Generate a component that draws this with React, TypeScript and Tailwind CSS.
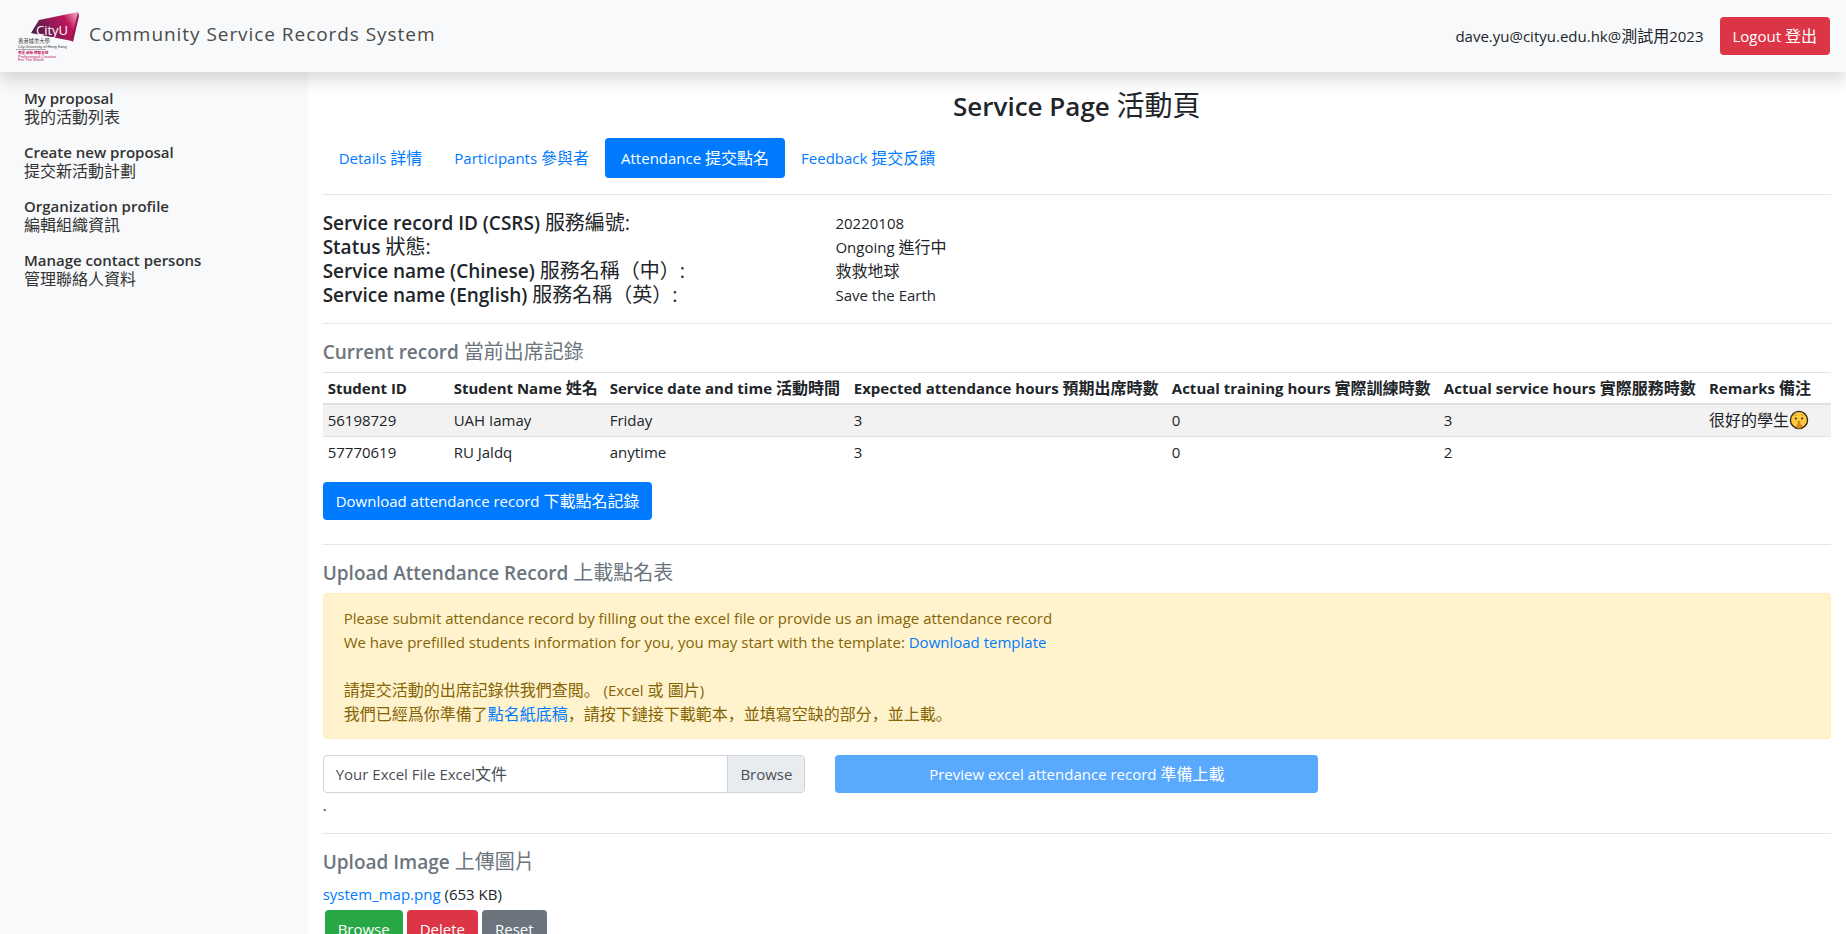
import type { ReactNode } from "react";

function Zh({ children }: { children: ReactNode }) {
  return (
    <span lang="zh-HK" className="text-[16px]">
      {children}
    </span>
  );
}

function CityULogo() {
  return (
    <svg width="64" height="52" viewBox="0 0 64 52" role="img" aria-label="CityU" className="shrink-0">
      <defs>
        <linearGradient id="gem" x1="0" y1="0.6" x2="1" y2="0.2">
          <stop offset="0" stopColor="#4a1d45" />
          <stop offset="0.4" stopColor="#8c1a55" />
          <stop offset="0.75" stopColor="#c0145c" />
          <stop offset="1" stopColor="#e79ab8" />
        </linearGradient>
      </defs>
      <path d="M15 23 23 10 62 2 57 30 56 31Z" fill="url(#gem)" />
      <path d="M62 2 63 6 57 32 55 30Z" fill="#a01252" />
      <text x="20" y="25" fontSize="13" fill="#ffffff" fontFamily="'Open Sans', sans-serif">CityU</text>
      <text x="2" y="33" fontSize="5.3" fill="#333333" fontFamily="'Noto Sans CJK TC', sans-serif">香港城市大學</text>
      <text x="2" y="38" fontSize="3.8" fill="#333333" fontFamily="'Liberation Sans', sans-serif">City University of Hong Kong</text>
      <path d="M0 39.5H30" stroke="#8c6a80" strokeWidth="0.6" />
      <text x="2" y="44" fontSize="3.6" fontWeight="700" fill="#c0145c" fontFamily="'Noto Sans CJK TC', sans-serif">專業 創新 胸懷全球</text>
      <text x="2" y="48" fontSize="4" fill="#c0145c" fontFamily="'Liberation Sans', sans-serif">Professional·Creative</text>
      <text x="2" y="51" fontSize="4" fill="#c0145c" fontFamily="'Liberation Sans', sans-serif">For The World</text>
    </svg>
  );
}

function ShushingFace() {
  return (
    <svg width="20" height="20" viewBox="0 0 20 20" role="img" aria-label="Shushing face" className="inline-block align-[-4px]">
      <circle cx="10" cy="10" r="8.6" fill="#ffc83d" stroke="#2b2410" strokeWidth="1.3" />
      <path d="M5 5.8q1.4-1.4 2.8-.8M12.2 5q1.4-.6 2.8.8" stroke="#c98a1c" strokeWidth="0.8" fill="none" />
      <circle cx="6.9" cy="8.6" r="1" fill="#2b2410" />
      <circle cx="13.1" cy="8.6" r="1" fill="#2b2410" />
      <path d="M9.2 11.4q.8-.8 1.6 0v3.2l1.8.4v2.9q-2.6.9-4.8.2v-2.8l1.4-.7Z" fill="#e08a1c" stroke="#a8640f" strokeWidth="0.5" />
    </svg>
  );
}

const menu = [
  ["My proposal", "我的活動列表"],
  ["Create new proposal", "提交新活動計劃"],
  ["Organization profile", "編輯組織資訊"],
  ["Manage contact persons", "管理聯絡人資料"],
];

const tabs = [
  ["Details", "詳情"],
  ["Participants", "參與者"],
  ["Attendance", "提交點名"],
  ["Feedback", "提交反饋"],
];

const info = [
  { en: "Service record ID (CSRS)", zh: "服務編號:", value: "20220108" },
  { en: "Status", zh: "狀態:", value: <>Ongoing <Zh>進行中</Zh></> },
  { en: "Service name (Chinese)", zh: "服務名稱（中）:", value: <Zh>救救地球</Zh> },
  { en: "Service name (English)", zh: "服務名稱（英）:", value: "Save the Earth" },
];

const columns = [
  { en: "Student ID", zh: "", width: "w-[126px]" },
  { en: "Student Name", zh: "姓名", width: "w-[156px]" },
  { en: "Service date and time", zh: "活動時間", width: "w-[244px]" },
  { en: "Expected attendance hours", zh: "預期出席時數", width: "w-[318px]" },
  { en: "Actual training hours", zh: "實際訓練時數", width: "w-[272px]" },
  { en: "Actual service hours", zh: "實際服務時數", width: "w-[265px]" },
  { en: "Remarks", zh: "備注", width: "w-[127px]" },
];

const rows = [
  ["56198729", "UAH Iamay", "Friday", "3", "0", "3", <><Zh>很好的學生</Zh><ShushingFace /></>],
  ["57770619", "RU Jaldq", "anytime", "3", "0", "2", ""],
];

function SectionHeading({ en, zh }: { en: string; zh: string }) {
  return (
    <h2 className="mb-2 text-[19px] leading-6 font-semibold text-[#6c757d]">
      {en} <span className="text-[20px] font-normal">{zh}</span>
    </h2>
  );
}

function Rule() {
  return <hr className="my-4 border-t border-[#e5e5e5]" />;
}

const button = "h-[38px] cursor-pointer rounded px-[13px] text-white whitespace-nowrap";

export default function App() {
  return (
    <div className="flex min-h-screen flex-col bg-white font-['Open_Sans','Noto_Sans_CJK_TC',sans-serif] text-[15px] leading-6 text-[#212529]">
      <header className="relative z-10 flex h-[72px] items-center justify-between bg-[#f8f9fb] px-4 shadow-[0_8px_16px_rgba(0,0,0,0.15)]">
        <a href="#home" className="flex items-center gap-[9px]">
          <CityULogo />
          <span className="pb-1 text-[19px] tracking-wider text-[#4a4a4a]">Community Service Records System</span>
        </a>
        <div className="flex items-center gap-4">
          <span>dave.yu@cityu.edu.hk@<Zh>測試用</Zh>2023</span>
          <button type="button" className={`${button} bg-[#dc3545]`}>Logout <Zh>登出</Zh></button>
        </div>
      </header>

      <div className="flex flex-1">
        <nav aria-label="Main menu" className="w-1/6 shrink-0 bg-[#f8f9fb] px-6 pt-[17px]">
          <ul className="flex flex-col gap-4">
            {menu.map(([en, zh]) => (
              <li key={en}>
                <a href="#menu" className="block leading-[19px] text-[#333333]">
                  <span className="block font-semibold">{en}</span>
                  <span lang="zh-HK" className="block text-[16px]">{zh}</span>
                </a>
              </li>
            ))}
          </ul>
        </nav>

        <main className="min-w-0 flex-1 px-[15px] pt-4 pb-8">
          <h1 className="mb-[15px] text-center text-[26px] leading-[34px] font-semibold">
            Service Page <span className="text-[28px] font-normal">活動頁</span>
          </h1>

          <nav aria-label="Service sections" className="flex">
            {tabs.map(([en, zh]) => (
              <a
                key={en}
                href="#tab"
                aria-current={en === "Attendance" ? "page" : undefined}
                className={
                  en === "Attendance"
                    ? "rounded bg-[#007bff] px-4 py-2 text-white"
                    : "px-4 py-2 text-[#007bff]"
                }
              >
                {en} <Zh>{zh}</Zh>
              </a>
            ))}
          </nav>
          <Rule />

          <dl>
            {info.map(({ en, zh, value }) => (
              <div key={en} className="grid grid-cols-3 gap-x-[30px]">
                <dt className="text-[19px] font-semibold whitespace-nowrap">
                  {en} <span className="text-[20px] font-normal">{zh}</span>
                </dt>
                <dd>{value}</dd>
              </div>
            ))}
          </dl>
          <Rule />

          <SectionHeading en="Current record" zh="當前出席記錄" />
          <table className="mb-[14px] w-full table-fixed border-collapse text-left">
            <thead>
              <tr className="border-t border-b-2 border-t-[#dee2e6] border-b-[#dee2e6]">
                {columns.map(({ en, zh, width }) => (
                  <th key={en} scope="col" className={`${width} px-[5px] py-[3px] font-bold whitespace-nowrap`}>
                    {en} <Zh>{zh}</Zh>
                  </th>
                ))}
              </tr>
            </thead>
            <tbody>
              {rows.map((row, i) => (
                <tr key={i} className="border-t border-[#dee2e6] odd:bg-[#f2f2f2]">
                  {row.map((cell, j) => (
                    <td key={j} className="h-8 px-[5px] py-[3px] whitespace-nowrap">{cell}</td>
                  ))}
                </tr>
              ))}
            </tbody>
          </table>
          <button type="button" className={`${button} block bg-[#007bff]`}>
            Download attendance record <Zh>下載點名記錄</Zh>
          </button>
          <div className="pt-2"><Rule /></div>

          <SectionHeading en="Upload Attendance Record" zh="上載點名表" />
          <div className="mb-4 rounded border border-[#ffeeba] bg-[#fff3cd] px-5 py-3 text-[#856404]">
            <p>Please submit attendance record by filling out the excel file or provide us an image attendance record</p>
            <p className="mb-6">
              We have prefilled students information for you, you may start with the template:{" "}
              <a href="#template" className="text-[#007bff]">Download template</a>
            </p>
            <div lang="zh-CN" className="font-['Open_Sans','Noto_Sans_CJK_SC',sans-serif]">
              <p>
                <span className="text-[16px]">請提交活動的出席記錄供我們查閲。</span> (Excel{" "}
                <span className="text-[16px]">或 圖片</span>)
              </p>
              <p className="text-[16px]">
                我們已經爲你準備了<a href="#template" className="text-[#007bff]">點名紙底稿</a>，請按下鏈接下載範本，並填寫空缺的部分，並上載。
              </p>
            </div>
          </div>

          <div className="grid grid-cols-3 gap-x-[30px]">
            <label className="flex h-[38px] cursor-pointer overflow-hidden rounded border border-[#ced4da] text-[#495057]">
              <input type="file" className="sr-only" />
              <span className="flex-1 px-3 py-[6px]">Your Excel File Excel<Zh>文件</Zh></span>
              <span className="border-l border-[#ced4da] bg-[#e9ecef] px-3 py-[6px]">Browse</span>
            </label>
            <button type="button" disabled className="h-[38px] rounded bg-[#59a9ff] text-white">
              Preview excel attendance record <Zh>準備上載</Zh>
            </button>
          </div>
          <p>.</p>
          <Rule />

          <SectionHeading en="Upload Image" zh="上傳圖片" />
          <p><a href="#file" className="text-[#007bff]">system_map.png</a> (653 KB)</p>
          <div className="flex gap-1 px-[2px] pt-1">
            <button type="button" className={`${button} bg-[#28a745]`}>Browse</button>
            <button type="button" className={`${button} bg-[#dc3545]`}>Delete</button>
            <button type="button" className={`${button} bg-[#6c757d]`}>Reset</button>
          </div>
        </main>
      </div>
    </div>
  );
}
